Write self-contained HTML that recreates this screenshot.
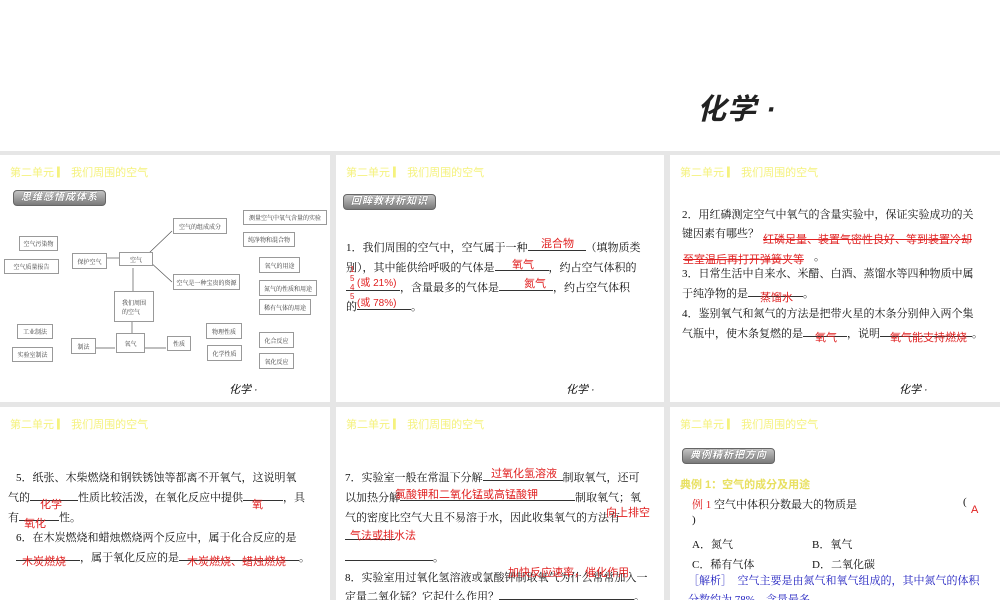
<!DOCTYPE html>
<html><head><meta charset="utf-8"><style>
*{margin:0;padding:0;box-sizing:border-box}
body{width:1000px;height:600px;position:relative;background:#e6e6e6;font-family:"Liberation Sans","Noto Sans CJK SC",sans-serif;overflow:hidden}
.top{position:absolute;left:0;top:0;width:1000px;height:151px;background:#fff}
.p{position:absolute;background:#fff;overflow:hidden}
.h{position:absolute;left:10px;top:9px;font-size:11px;color:#f5f27e;white-space:nowrap}
.t{position:absolute;font-size:11px;color:#111;white-space:nowrap;font-family:"Liberation Serif","Noto Serif CJK SC",serif}
.r{position:absolute;font-size:11px;color:#e02020;white-space:nowrap}
.u{display:inline-block;border-bottom:1px solid #333;height:11px;vertical-align:baseline}
.logo{position:absolute;font-style:italic;font-size:11px;color:#111;white-space:nowrap}
.btn{position:absolute;height:16px;line-height:13px;border-radius:4px;background:linear-gradient(#c4c4c4,#7a7a7a);color:#fff;font-size:10px;font-style:italic;font-weight:bold;padding:0 7px;letter-spacing:1px;border:1px solid #666;white-space:nowrap;text-shadow:0 0 1px #333}
.b{position:absolute;border:1px solid #999;font-size:6px;color:#333;background:#fff;display:flex;align-items:center;justify-content:center;white-space:nowrap;font-family:"Noto Serif CJK SC",serif}
</style></head><body>
<div class="top"><div style="position:absolute;left:697px;top:86px;font-size:29px;font-style:italic;font-weight:bold;color:#222;letter-spacing:1px">化学 ·</div></div>

<!-- panel 1 -->
<div class="p" style="left:0;top:155px;width:330px;height:247px">
<div class="h">第二单元 ▎ 我们周围的空气</div>
<div class="btn" style="left:13px;top:35px">思维感悟成体系</div>
<svg style="position:absolute;left:0;top:0" width="330" height="247"><g stroke="#555" fill="none" stroke-width="0.7">
<line x1="149" y1="98" x2="172" y2="76"/><line x1="149" y1="106" x2="172" y2="127"/>
<line x1="119" y1="103" x2="106" y2="103"/><line x1="133" y1="137" x2="133" y2="113"/>
<line x1="132" y1="167" x2="132" y2="184"/><line x1="115" y1="193" x2="96" y2="193"/><line x1="145" y1="193" x2="166" y2="193"/></g></svg>
<div class="b" style="left:173px;top:63px;width:54px;height:16px">空气的组成成分</div>
<div class="b" style="left:243px;top:55px;width:84px;height:15px">测量空气中氧气含量的实验</div>
<div class="b" style="left:243px;top:77px;width:52px;height:15px">纯净物和混合物</div>
<div class="b" style="left:19px;top:81px;width:39px;height:15px">空气污染物</div>
<div class="b" style="left:4px;top:104px;width:55px;height:15px">空气质量报告</div>
<div class="b" style="left:72px;top:98px;width:35px;height:16px">保护空气</div>
<div class="b" style="left:119px;top:97px;width:34px;height:14px">空气</div>
<div class="b" style="left:259px;top:102px;width:41px;height:16px">氧气的用途</div>
<div class="b" style="left:173px;top:119px;width:67px;height:16px">空气是一种宝贵的资源</div>
<div class="b" style="left:259px;top:125px;width:58px;height:16px">氮气的性质和用途</div>
<div class="b" style="left:259px;top:144px;width:52px;height:16px">稀有气体的用途</div>
<div class="b" style="left:114px;top:136px;width:40px;height:31px;justify-content:flex-start;padding-left:7px;white-space:normal;line-height:9px">我们周围<br>的空气</div>
<div class="b" style="left:17px;top:169px;width:36px;height:15px">工业制法</div>
<div class="b" style="left:12px;top:192px;width:41px;height:15px">实验室制法</div>
<div class="b" style="left:71px;top:183px;width:25px;height:16px">制法</div>
<div class="b" style="left:116px;top:178px;width:29px;height:20px">氧气</div>
<div class="b" style="left:167px;top:181px;width:24px;height:15px">性质</div>
<div class="b" style="left:206px;top:168px;width:36px;height:16px">物理性质</div>
<div class="b" style="left:207px;top:190px;width:35px;height:16px">化学性质</div>
<div class="b" style="left:259px;top:177px;width:35px;height:16px">化合反应</div>
<div class="b" style="left:259px;top:198px;width:35px;height:16px">氧化反应</div>
<div class="logo" style="left:229px;top:226px">化学 ·</div>
</div>

<!-- panel 2 -->
<div class="p" style="left:336px;top:155px;width:328px;height:247px">
<div class="h">第二单元 ▎ 我们周围的空气</div>
<div class="btn" style="left:7px;top:39px">回眸教材析知识</div>
<div class="t" style="left:10px;top:84px">1．我们周围的空气中，空气属于一种<span class="u" style="width:58px"></span>（填物质类</div>
<div class="t" style="left:10px;top:104px">别），其中能供给呼吸的气体是<span class="u" style="width:54px"></span>，约占空气体积的</div>
<div class="t" style="left:10px;top:124px"><span class="u" style="width:54px"></span>，含量最多的气体是<span class="u" style="width:54px"></span>，约占空气体积</div>
<div class="t" style="left:10px;top:143px">的<span class="u" style="width:54px"></span>。</div>
<div class="r" style="left:205px;top:80px">混合物</div>
<div class="r" style="left:176px;top:101px">氧气</div>
<div class="r" style="left:188px;top:120px">氮气</div>
<div class="r" style="left:21px;top:119px;font-size:10px">(或 21%)</div>
<div class="r" style="left:21px;top:139px;font-size:10px">(或 78%)</div>
<div class="r" style="left:14px;top:110px;font-size:8px;line-height:9px">1<br>5<br>4<br>5</div>
<div class="logo" style="left:230px;top:226px">化学 ·</div>
</div>

<!-- panel 3 -->
<div class="p" style="left:670px;top:155px;width:330px;height:247px">
<div class="h">第二单元 ▎ 我们周围的空气</div>
<div class="t" style="left:12px;top:51px">2．用红磷测定空气中氧气的含量实验中，保证实验成功的关</div>
<div class="t" style="left:12px;top:70px">键因素有哪些？</div>
<div class="r" style="left:93px;top:76px;text-decoration:line-through">红磷足量、装置气密性良好、等到装置冷却</div>
<div class="r" style="left:13px;top:96px;text-decoration:line-through">至室温后再打开弹簧夹等</div>
<div class="t" style="left:144px;top:93px">。</div>
<div class="t" style="left:12px;top:110px">3．日常生活中自来水、米醋、白酒、蒸馏水等四种物质中属</div>
<div class="t" style="left:12px;top:130px">于纯净物的是<span class="u" style="width:55px"></span>。</div>
<div class="r" style="left:90px;top:134px">蒸馏水</div>
<div class="t" style="left:12px;top:150px">4．鉴别氧气和氮气的方法是把带火星的木条分别伸入两个集</div>
<div class="t" style="left:12px;top:170px">气瓶中，使木条复燃的是<span class="u" style="width:44px"></span>，说明<span class="u" style="width:92px"></span>。</div>
<div class="r" style="left:145px;top:174px">氧气</div>
<div class="r" style="left:220px;top:174px">氧气能支持燃烧</div>
<div class="logo" style="left:229px;top:226px">化学 ·</div>
</div>

<!-- panel 4 -->
<div class="p" style="left:0;top:407px;width:330px;height:193px">
<div class="h">第二单元 ▎ 我们周围的空气</div>
<div class="t" style="left:16px;top:62px">5．纸张、木柴燃烧和钢铁锈蚀等都离不开氧气，这说明氧</div>
<div class="t" style="left:8px;top:82px">气的<span class="u" style="width:48px"></span>性质比较活泼，在氧化反应中提供<span class="u" style="width:40px"></span>，具</div>
<div class="t" style="left:8px;top:102px">有<span class="u" style="width:40px"></span>性。</div>
<div class="r" style="left:40px;top:89px">化学</div>
<div class="r" style="left:252px;top:89px">氧</div>
<div class="r" style="left:24px;top:108px">氧化</div>
<div class="t" style="left:16px;top:122px">6．在木炭燃烧和蜡烛燃烧两个反应中，属于化合反应的是</div>
<div class="t" style="left:16px;top:142px"><span class="u" style="width:64px"></span>，属于氧化反应的是<span class="u" style="width:120px"></span>。</div>
<div class="r" style="left:22px;top:146px">木炭燃烧</div>
<div class="r" style="left:187px;top:146px">木炭燃烧、蜡烛燃烧</div>
</div>

<!-- panel 5 -->
<div class="p" style="left:336px;top:407px;width:328px;height:193px">
<div class="h">第二单元 ▎ 我们周围的空气</div>
<div class="t" style="left:9px;top:62px">7．实验室一般在常温下分解<span class="u" style="width:80px"></span>制取氧气，还可</div>
<div class="t" style="left:9px;top:82px">以加热分解<span class="u" style="width:175px"></span>制取氧气；氧</div>
<div class="t" style="left:9px;top:102px">气的密度比空气大且不易溶于水，因此收集氧气的方法有</div>
<div class="t" style="left:9px;top:122px"><span class="u" style="width:50px"></span></div>
<div class="t" style="left:9px;top:142px"><span class="u" style="width:88px"></span>。</div>
<div class="t" style="left:9px;top:162px">8．实验室用过氧化氢溶液或氯酸钾制取氧气为什么常常加入一</div>
<div class="t" style="left:9px;top:181px">定量二氧化锰？它起什么作用？<span class="u" style="width:135px"></span>。</div>
<div class="r" style="left:155px;top:58px">过氧化氢溶液</div>
<div class="r" style="left:59px;top:79px">氯酸钾和二氧化锰或高锰酸钾</div>
<div class="r" style="left:270px;top:97px">向上排空</div>
<div class="r" style="left:14px;top:120px">气法或排水法</div>
<div class="r" style="left:172px;top:157px">加快反应速率，催化作用</div>
</div>

<!-- panel 6 -->
<div class="p" style="left:670px;top:407px;width:330px;height:193px">
<div class="h">第二单元 ▎ 我们周围的空气</div>
<div class="btn" style="left:12px;top:41px">典例精析把方向</div>
<div style="position:absolute;left:10px;top:69px;font-size:11px;font-weight:bold;color:#e8e060;white-space:nowrap">典例 1：空气的成分及用途</div>
<div class="t" style="left:22px;top:89px"><span style="color:#e02020">例 1</span> 空气中体积分数最大的物质是</div>
<div class="t" style="left:293px;top:89px">(</div>
<div class="r" style="left:301px;top:97px">A</div>
<div class="t" style="left:22px;top:107px">)</div>
<div class="t" style="left:22px;top:129px">A．氮气</div><div class="t" style="left:142px;top:129px">B．氧气</div>
<div class="t" style="left:22px;top:149px">C．稀有气体</div><div class="t" style="left:142px;top:149px">D．二氧化碳</div>
<div class="t" style="left:18px;top:165px;color:#2020c0">［解析］　空气主要是由氮气和氧气组成的，其中氮气的体积</div>
<div class="t" style="left:18px;top:184px;color:#2020c0">分数约为 78%，含量最多。</div>
</div>
</body></html>
